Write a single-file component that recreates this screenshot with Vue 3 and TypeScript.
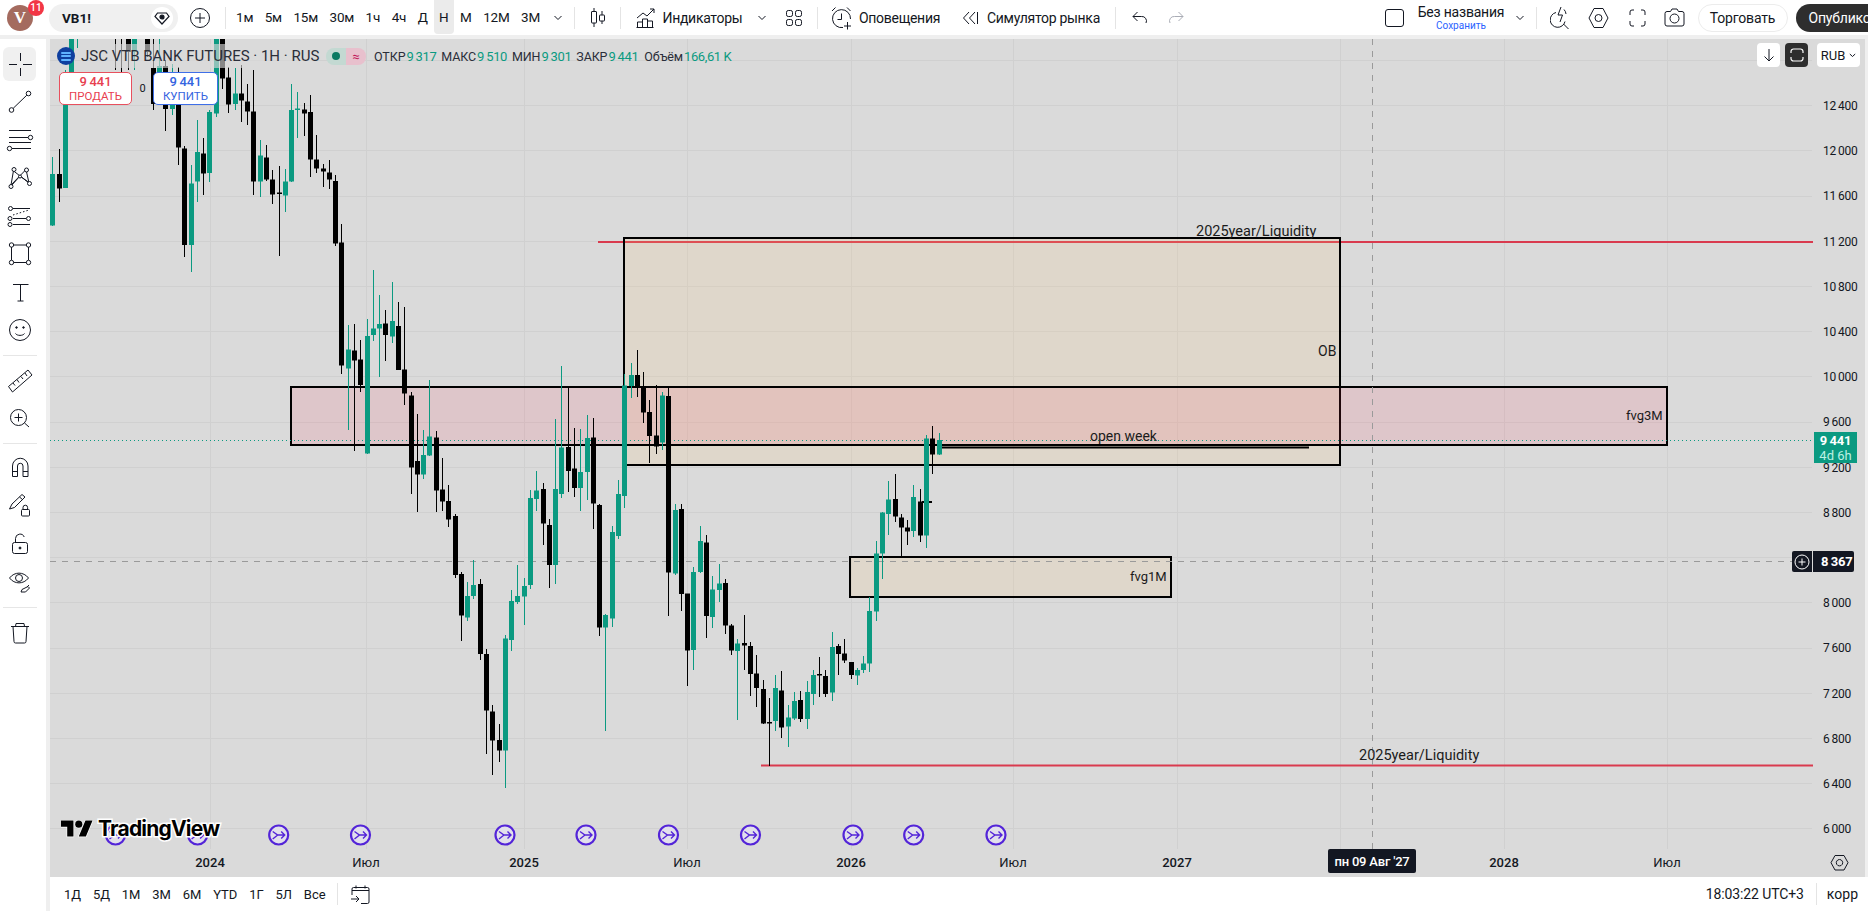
<script setup lang="ts">
type Row = [number, number, number, number, number, number]

// Candles read off the chart: [index, up, wickTop, bodyTop, bodyBottom, wickBottom]
const upper: Row[] = [
  [0,1,320,372,527,527],[1,0,295,372,416,455],[2,1,60,66,414,414],[3,1,-36,-36,66,66],[4,1,-36,-36,-36,-6],
  [10,0,-36,-40,-40,60],[11,0,-36,-40,-40,150],[12,0,-36,-36,6,60],[13,1,-36,-36,6,60],[15,0,-36,-36,6,20],
  [16,0,-36,54,162,180],[17,1,-36,48,90,110],[18,0,30,48,177,242],[19,1,40,120,177,195],[20,0,50,150,293,345],
  [21,0,288,295,585,620],[22,1,345,400,585,665],[23,1,210,306,395,455],[24,0,262,310,371,435],[25,1,180,186,369,395],
  [26,1,-36,-36,190,200],[27,0,-36,-36,85,115],[28,0,50,82,164,188],[29,1,52,130,162,178],[30,0,45,130,152,215],
  [31,0,100,154,185,225],[32,0,58,184,395,435],[33,1,268,316,395,440],[34,0,283,322,388,392],[35,0,360,388,434,460],
  [36,0,348,427,431,617],[37,1,355,394,437,485],[38,1,100,180,395,395],[39,1,124,176,179,263],[40,0,157,178,191,257],
  [41,0,135,186,329,380],[42,0,253,328,356,368],[43,0,340,355,365,410],[44,0,330,367,389,416],[45,0,375,393,580,588],
  [46,0,520,577,947,971],[47,1,823,898,956,1140],[48,0,820,901,932,1202],[49,0,870,928,1005,1025],[50,1,805,858,1211,1211],
  [51,1,658,835,855,872],[52,1,733,822,836,980],[53,0,778,820,855,932],[54,1,694,813,860,878],[55,0,754,828,960,960],
  [56,0,770,958,1031,1065],[57,0,1024,1036,1253,1331],[58,0,1092,1233,1274,1385],[59,1,1140,1215,1274,1287],
  [60,1,988,1160,1217,1217],[61,0,1143,1162,1322,1385],[62,0,1222,1318,1355,1382],[63,0,1303,1353,1409,1430],
  [64,0,1392,1398,1575,1583],[65,0,1566,1572,1697,1772],[66,1,1596,1638,1703,1712],[67,1,1528,1605,1638,1646],
  [68,0,1585,1602,1812,1830],[69,0,1795,1812,1982,2112],[70,0,1965,1984,2072,2175],[71,0,2022,2070,2102,2135],
]
const lower: Row[] = [
  [72,1,885,895,1232,1342],[73,1,750,783,900,932],[74,1,675,768,786,790],[75,1,712,738,770,855],[76,1,450,474,735,745],
  [77,1,393,452,477,513],[78,0,427,447,551,615],[79,0,537,555,675,743],[80,1,235,447,675,730],[81,1,78,323,462,472],
  [82,0,143,321,393,455],[83,0,262,385,444,470],[84,1,265,396,444,513],[85,1,225,294,396,478],[86,0,232,292,491,567],
  [87,0,490,495,863,887],[88,1,822,825,863,1172],[89,1,558,576,836,860],[90,1,420,462,588,597],[91,1,100,137,468,503],
  [92,1,67,105,138,173],[93,0,28,105,140,170],[94,0,95,140,218,248],[95,0,180,216,288,368],[96,0,135,286,320,342],
  [97,1,155,167,308,330],[98,0,142,168,698,827],[99,1,490,510,700,703],[100,0,492,507,762,812],[101,0,760,760,932,1037],
  [102,1,680,696,930,990],[103,1,558,603,696,697],[104,0,585,608,828,893],[105,1,708,748,831,863],[106,1,672,730,750,785],
  [107,0,717,729,857,882],[108,0,850,857,932,945],[109,1,895,910,933,1140],[110,0,825,909,917,990],[111,0,905,918,1002,1067],
  [112,0,945,1000,1044,1100],[113,0,1018,1047,1151,1151],[114,0,1072,1146,1149,1277],[115,1,1003,1044,1143,1172],
  [116,0,993,1051,1163,1193],[117,1,1095,1132,1160,1220],[118,1,1055,1083,1135,1138],[119,0,1052,1080,1137,1145],
  [120,1,1023,1056,1137,1167],[121,1,988,1005,1062,1094],[122,0,951,1002,1005,1070],[123,0,990,1008,1062,1070],
  [124,1,876,921,1058,1083],[125,0,910,918,942,1005],[126,0,897,940,961,968],[127,0,965,966,1005,1017],
  [128,1,984,990,1007,1035],[129,1,948,970,990,997],[130,1,770,813,971,996],[131,1,602,640,815,843],[132,1,515,518,641,717],
  [133,1,423,478,522,585],[134,0,402,477,530,546],[135,0,520,532,563,650],[136,0,540,562,575,615],[137,1,435,471,573,590],
  [138,0,445,485,587,605],[139,1,283,295,587,622],[140,0,258,295,344,402],[141,1,277,300,344,345],
]

const candles = [
  ...upper.map((r) => ({ r, base: 50 })),
  ...lower.map((r) => ({ r, base: 340 })),
].map(({ r, base }) => {
  const y = (v: number) => Math.round((base + v / 3) * 2) / 2
  const x = Math.round(52.3 + 6.286 * r[0])
  return {
    id: r[0],
    x,
    color: r[1] ? '#0b9a81' : '#000000',
    wickTop: y(r[2]),
    wickBottom: y(r[5]),
    bodyTop: y(r[3]),
    bodyHeight: Math.max(y(r[4]) - y(r[3]), r[3] === r[4] ? 0 : 1.5),
  }
})

const gridY = Array.from({ length: 18 }, (_, k) => 60.5 + Math.round(45.2 * k))
const gridX = [210, 366, 524, 687, 851, 1013, 1177, 1340, 1504, 1667]
const prices = ['12\u2009400', '12\u2009000', '11\u2009600', '11\u2009200', '10\u2009800', '10\u2009400', '10\u2009000', '9\u2009600', '9\u2009200', '8\u2009800', '', '8\u2009000', '7\u2009600', '7\u2009200', '6\u2009800', '6\u2009400', '6\u2009000']
  .map((t, k) => ({ t, y: 105.5 + 45.2 * k }))
  .filter((p) => p.t)
const times = [
  { t: '2024', x: 210, b: true }, { t: 'Июл', x: 366, b: false }, { t: '2025', x: 524, b: true }, { t: 'Июл', x: 687, b: false },
  { t: '2026', x: 851, b: true }, { t: 'Июл', x: 1013, b: false }, { t: '2027', x: 1177, b: true },
  { t: '2028', x: 1504, b: true }, { t: 'Июл', x: 1667, b: false },
]
const events = [115.5, 197.6, 278.7, 360.5, 505, 586, 668.5, 750.5, 853, 913.7, 996]
const intervals = ['1м', '5м', '15м', '30м', '1ч', '4ч', 'Д', 'Н', 'М', '12М', '3М']
const ranges = ['1Д', '5Д', '1М', '3М', '6М', 'YTD', '1Г', '5Л', 'Все']
const ohlc = [['ОТКР', '9\u2009317'], ['МАКС', '9\u2009510'], ['МИН', '9\u2009301'], ['ЗАКР', '9\u2009441']]
const lastPrice = '9\u2009441'
const crossPrice = '8\u2009367'
</script>

<template>
  <div class="app">
    <header class="topbar">
      <div class="avatar"><span>V</span><b class="badge">11</b></div>
      <div class="symbol">
        <span class="symbol-name">VB1!</span>
        <span class="symbol-gem">
          <svg width="18" height="18" viewBox="0 0 18 18" fill="none" stroke="#131722" stroke-width="1.2">
            <path d="M4.5 4h9L16 7.5 9 15 2 7.5z" />
            <circle cx="9" cy="8" r="2" fill="#131722" />
          </svg>
        </span>
      </div>
      <svg class="plus" width="22" height="22" viewBox="0 0 22 22" fill="none" stroke="#131722">
        <circle cx="11" cy="11" r="9.5" /><path d="M11 6v10M6 11h10" />
      </svg>
      <i class="sep sep-a"></i>
      <nav class="intervals">
        <button v-for="t in intervals" :key="t" class="tf" :class="{ on: t === 'Н' }">{{ t }}</button>
      </nav>
      <svg class="chev chev-tf" width="10" height="6" viewBox="0 0 10 6" fill="none" stroke="#131722"><path d="M1.5 1L5 4.5 8.5 1" /></svg>
      <i class="sep sep-b"></i>
      <svg class="candle-ico" width="16" height="20" viewBox="0 0 16 20" fill="none" stroke="#131722">
        <path d="M4 0v3M4 15v4M12 3v4M12 13v3" /><rect x="1.5" y="3.5" width="5" height="11.5" rx=".5" /><rect x="9.5" y="7" width="5" height="6" rx=".5" />
      </svg>
      <i class="sep sep-c"></i>
      <svg class="ind-ico" width="20" height="20" viewBox="0 0 20 20" fill="none" stroke="#131722">
        <path d="M1 10l6-5 4 3 7-7M14 1h4v4" /><path d="M1.5 19v-5h5v5M6.5 19v-8h5v8M11.5 19v-6h5v6M.5 19.5h17" />
      </svg>
      <span class="label l-ind">Индикаторы</span>
      <svg class="chev chev-ind" width="10" height="6" viewBox="0 0 10 6" fill="none" stroke="#131722"><path d="M1.5 1L5 4.5 8.5 1" /></svg>
      <svg class="grid-ico" width="18" height="18" viewBox="0 0 18 18" fill="none" stroke="#131722">
        <rect x="1.5" y="1.5" width="6" height="6" rx="1.8" /><rect x="10.5" y="1.5" width="6" height="6" rx="1.8" />
        <rect x="1.5" y="10.5" width="6" height="6" rx="1.8" /><rect x="10.5" y="10.5" width="6" height="6" rx="1.8" />
      </svg>
      <i class="sep sep-d"></i>
      <svg class="alert-ico" width="22" height="24" viewBox="0 0 22 24" fill="none" stroke="#131722">
        <path d="M12 21.500A9 9 0 1 1 19.500 13M10.500 7.500v6h-4M1 5l3.500-3.500M16 1.500L19.500 5M16.500 16v7.500M13 20h7" />
      </svg>
      <span class="label l-alert">Оповещения</span>
      <svg class="replay-ico" width="17" height="14" viewBox="0 0 17 14" fill="none" stroke="#131722">
        <path d="M7 1L1.500 7 7 13M13 1L7.500 7 13 13M15.500 1v12" />
      </svg>
      <span class="label l-replay">Симулятор рынка</span>
      <i class="sep sep-e"></i>
      <svg class="undo" width="15" height="13" viewBox="0 0 15 13" fill="none" stroke="#131722"><path d="M5.500 1L1 5.500 5.500 10M1 5.500h8.500a4.500 4.500 0 0 1 4.500 6.500" /></svg>
      <svg class="redo" width="15" height="13" viewBox="0 0 15 13" fill="none" stroke="#a9acb5"><path d="M9.500 1L14 5.500 9.500 10M14 5.500H5.500A4.500 4.500 0 0 0 1 12" /></svg>

      <span class="square"></span>
      <div class="layout"><span class="layout-name">Без названия</span><span class="layout-save">Сохранить</span></div>
      <svg class="chev chev-layout" width="10" height="6" viewBox="0 0 10 6" fill="none" stroke="#131722"><path d="M1.5 1L5 4.5 8.5 1" /></svg>
      <i class="sep sep-f"></i>
      <svg class="bolt" width="20" height="24" viewBox="0 0 20 24" fill="none" stroke="#131722">
        <path d="M6 6.500A7.500 7.500 0 1 0 15 15.500M13.500 18l5 5M11 1L8 9h4.500L10 16M14 3.500a7.500 7.500 0 0 1 2 4.500" />
      </svg>
      <svg class="hex" width="21" height="22" viewBox="0 0 21 22" fill="none" stroke="#131722">
        <path d="M6 1.500h9L20 11l-5 9.500H6L1 11z" /><circle cx="10.5" cy="11" r="3.5" />
      </svg>
      <svg class="full" width="17" height="18" viewBox="0 0 17 18" fill="none" stroke="#131722">
        <path d="M1 6V3a2 2 0 0 1 2-2h2M12 1h2a2 2 0 0 1 2 2v3M16 12v3a2 2 0 0 1-2 2h-2M5 17H3a2 2 0 0 1-2-2v-3" />
      </svg>
      <svg class="camera" width="21" height="19" viewBox="0 0 21 19" fill="none" stroke="#131722">
        <path d="M6.500 3.500L8 1h5l1.500 2.500H18a2 2 0 0 1 2 2V16a2 2 0 0 1-2 2H3a2 2 0 0 1-2-2V5.500a2 2 0 0 1 2-2z" /><circle cx="10.5" cy="10.5" r="4.5" />
      </svg>
      <button class="pill trade">Торговать</button>
      <button class="pill publish">Опубликовать</button>
    </header>

    <div class="main">
      <aside class="tools">
        <span class="tool">
          <svg viewBox="0 0 40 38" fill="none" stroke="#131722">
            <rect x="3" y="2" width="33" height="34" rx="6" fill="#f0f0f0" stroke="none" />
            <path d="M9 19.5h8M23 19.5h9M20.5 8v8M20.5 23v8" />
          </svg>
        </span>
        <span class="tool">
          <svg viewBox="0 0 40 38" fill="none" stroke="#131722">
            <circle cx="28.5" cy="10.5" r="2.3" /><circle cx="11.5" cy="27" r="2.3" /><path d="M26.800 12.200L13.200 25.300" />
          </svg>
        </span>
        <span class="tool">
          <svg viewBox="0 0 40 38" fill="none" stroke="#131722">
            <path d="M9 9.500h22M9 16.500h19M9 21.500h22M12 27.500h19" /><circle cx="30.5" cy="16.5" r="2.2" /><circle cx="9.5" cy="27.5" r="2.2" />
          </svg>
        </span>
        <span class="tool">
          <svg viewBox="0 0 40 38" fill="none" stroke="#131722">
            <path d="M13.500 11.500L11 26l15-15.500 3 13.500-16-12.500M20 17l9 6.500M20 17l-8 9" />
            <circle cx="14" cy="10.5" r="2" fill="#fff" /><circle cx="26.5" cy="11" r="2" fill="#fff" /><circle cx="29.5" cy="24.5" r="2" fill="#fff" /><circle cx="11" cy="27.5" r="2" fill="#fff" /><circle cx="20" cy="17.5" r="1.5" fill="#fff" />
          </svg>
        </span>
        <span class="tool">
          <svg viewBox="0 0 40 38" fill="none" stroke="#131722">
            <path d="M13 11.500h17M13 21.500h13M13 27.500h17" /><path d="M13 18l16-5" stroke-dasharray="1.5 2" />
            <circle cx="10.5" cy="11.5" r="2" /><circle cx="10" cy="21.5" r="2" /><circle cx="10" cy="27.5" r="2" /><circle cx="28.5" cy="21.5" r="2" />
          </svg>
        </span>
        <span class="tool">
          <svg viewBox="0 0 40 38" fill="none" stroke="#131722">
            <path d="M11.500 12v13M28.500 12v13M13.500 10h13M13.500 27.500h13" />
            <circle cx="11.5" cy="10" r="2.2" /><circle cx="28.5" cy="10" r="2.2" /><circle cx="11.5" cy="27.5" r="2.2" /><circle cx="28.5" cy="27.5" r="2.2" />
          </svg>
        </span>
        <span class="tool">
          <svg viewBox="0 0 40 38" fill="none" stroke="#131722"><path d="M13 11.500h15.500M20.500 11.500v16.500M17.500 28h6" /></svg>
        </span>
        <span class="tool">
          <svg viewBox="0 0 40 38" fill="none" stroke="#131722">
            <circle cx="20" cy="19" r="10.5" /><path d="M15.500 22.500c1.500 2.500 7.500 2.500 9 0" /><circle cx="16.5" cy="16.5" r=".8" fill="#131722" /><circle cx="23.5" cy="16.5" r=".8" fill="#131722" />
          </svg>
        </span>
        <i class="rule"></i>
        <span class="tool">
          <svg viewBox="0 0 40 38" fill="none" stroke="#131722">
            <path d="M8.500 25.500L28 9l4 5-19.500 17zM13 22l2 2.500M17 18.500l2 3M21 15.500l2 2.500M25 12l2 3" />
          </svg>
        </span>
        <span class="tool">
          <svg viewBox="0 0 40 38" fill="none" stroke="#131722">
            <circle cx="18.5" cy="18.5" r="8" /><path d="M24.500 24l4.500 4M18.500 14.500v8M14.500 18.500h8" />
          </svg>
        </span>
        <i class="rule"></i>
        <span class="tool">
          <svg viewBox="0 0 40 38" fill="none" stroke="#131722">
            <path d="M12.500 27.500V17a7.700 7.700 0 0 1 15.500 0v10.500h-5V17a2.700 2.700 0 0 0-5.500 0v10.500zM12.500 22.500h5M23 22.500h5" />
          </svg>
        </span>
        <span class="tool">
          <svg viewBox="0 0 40 38" fill="none" stroke="#131722">
            <path d="M12 17l10-9.500 3 2.500-10.500 10.500-5 1.500zM19.500 10l3.500 3" /><rect x="21.5" y="22.5" width="8" height="6.5" rx="1" /><path d="M23 22.500v-2a2.300 2.300 0 0 1 4.600 0v2" />
          </svg>
        </span>
        <span class="tool">
          <svg viewBox="0 0 40 38" fill="none" stroke="#131722">
            <rect x="12.5" y="17.5" width="15" height="11" rx="2" /><path d="M15.500 17.500v-4a4.500 4.500 0 0 1 8.700-1.500" /><circle cx="20" cy="23" r="1" fill="#131722" />
          </svg>
        </span>
        <span class="tool">
          <svg viewBox="0 0 40 38" fill="none" stroke="#131722">
            <path d="M9.500 15c5-6.500 14-6.500 19 0-5 6.500-14 6.500-19 0z" /><circle cx="19" cy="15" r="3.5" /><path d="M21 29l1-2.500 6-3 1.500 1.500-4 4zM29 22l-2 2" />
          </svg>
        </span>
        <i class="rule"></i>
        <span class="tool">
          <svg viewBox="0 0 40 38" fill="none" stroke="#131722">
            <path d="M11 13.500h18M15.500 13.500l.5-3h8l.5 3M13 13.500l1 15a1.500 1.500 0 0 0 1.500 1.500h9a1.500 1.500 0 0 0 1.500-1.500l1-15" />
          </svg>
        </span>
      </aside>

      <div class="workspace">
        <section class="chart">
          <svg class="canvas" viewBox="50 39 1815 838" width="1815" height="838">
            <g stroke="#d0d0d0" shape-rendering="crispEdges">
              <line v-for="y in gridY" :key="y" x1="50" x2="1812" :y1="y" :y2="y" />
              <line v-for="x in gridX" :key="x" :x1="x + 0.5" :x2="x + 0.5" y1="39" y2="849" />
            </g>

            <line x1="598" x2="1813" y1="242" y2="242" stroke="#d93a4e" stroke-width="2" />
            <line x1="761" x2="1813" y1="765.5" y2="765.5" stroke="#d93a4e" stroke-width="2" />
            <g stroke="#000" stroke-width="2">
              <rect x="624" y="238" width="716" height="227" fill="rgba(255,200,120,.15)" />
              <rect x="291" y="387" width="1376" height="58" fill="rgba(255,60,90,.12)" />
              <rect x="850" y="557" width="321" height="40" fill="rgba(255,200,120,.15)" />
            </g>
            <line x1="941" x2="1309" y1="447.5" y2="447.5" stroke="#000" stroke-width="2" />
            <line x1="922" x2="932" y1="502" y2="502" stroke="#000" stroke-width="2" />

            <g stroke="#9a9a9a" stroke-dasharray="6 6">
              <line x1="50" x2="1812" y1="561.5" y2="561.5" />
              <line x1="1372.5" x2="1372.5" y1="39" y2="849" />
            </g>
            <line x1="50" x2="1814" y1="440.5" y2="440.5" stroke="#0b9a81" stroke-dasharray="1 3" />

            <g v-for="c in candles" :key="c.id">
              <line :x1="c.x + 0.5" :x2="c.x + 0.5" :y1="c.wickTop" :y2="c.wickBottom" :stroke="c.color" shape-rendering="crispEdges" />
              <rect :x="c.x - 2" :y="c.bodyTop" width="5" :height="c.bodyHeight" :fill="c.color" />
            </g>

            <text class="note wide" x="1196" y="236">2025year/Liquidity</text>
            <text class="note wide" x="1359" y="760">2025year/Liquidity</text>
            <text class="note" x="1318" y="356">OB</text>
            <text class="note fvg" x="1626" y="420">fvg3M</text>
            <text class="note" x="1090" y="441">open week</text>
            <text class="note fvg" x="1130" y="581">fvg1M</text>

            <g v-for="x in events" :key="x" :transform="`translate(${x} 835)`">
              <circle r="9.5" fill="#e2e0ec" stroke="#5324d8" stroke-width="2.2" />
              <path d="M-6-3.500L-1 0H6M2.500-3.500L6 0 2.500 3.500M-6 4L-1 0" fill="none" stroke="#5324d8" stroke-width="1.4" />
            </g>

            <text v-for="p in prices" :key="p.t" class="axis price" x="1823" :y="p.y + 4.5">{{ p.t }}</text>
            <text v-for="(t, i) in times" :key="i" class="axis" :class="{ year: t.b }" :x="t.x" y="867" text-anchor="middle">{{ t.t }}</text>
            <path d="M1835 855.5h9l4 7.2-4 7.300h-9l-4-7.300z M1839.5 859.5a3.200 3.200 0 1 0 .01 0z" fill="none" stroke="#131722" />
          </svg>

          <div class="brand">
            <svg width="32" height="25" viewBox="0 0 36 28" fill="#000" stroke="#fff" stroke-width="1.5" paint-order="stroke">
              <path d="M14 22H7V11H0V4h14v18zM28 22h-8l7.500-18h8L28 22z" /><circle cx="20" cy="8" r="4" />
            </svg>
            <span>TradingView</span>
          </div>

          <div class="legend">
            <div class="legend-row">
              <span class="ticker-logo"><i></i><i></i><i></i></span>
              <span class="ticker">JSC VTB BANK FUTURES · 1H · RUS</span>
              <span class="status"><span class="st-open"><i></i></span><span class="st-delay">≈</span></span>
              <span v-for="o in ohlc" :key="o[0]" class="ohlc">{{ o[0] }}<b>{{ o[1] }}</b></span>
              <span class="ohlc vol">Объём<b>166,61 K</b></span>
            </div>
          </div>

          <div class="trade-row">
            <div class="order sell"><b>{{ lastPrice }}</b><span>ПРОДАТЬ</span></div>
            <span class="spread">0</span>
            <div class="order buy"><b>{{ lastPrice }}</b><span>КУПИТЬ</span></div>
          </div>

          <div class="corner">
            <span class="mini">
              <svg width="12" height="14" viewBox="0 0 12 14" fill="none" stroke="#131722"><path d="M6 1v12M1.500 8.500L6 13l4.500-4.500" /></svg>
            </span>
            <span class="mini dark">
              <svg width="14" height="14" viewBox="0 0 14 14" fill="none" stroke="#fff" stroke-width="1.2"><path d="M1 5V3.500A2.500 2.500 0 0 1 3.500 1h7A2.500 2.500 0 0 1 13 3.500V5M13 9v1.500a2.500 2.500 0 0 1-2.500 2.500h-7A2.500 2.500 0 0 1 1 10.500V9" /></svg>
            </span>
            <span class="mini currency">RUB
              <svg width="7" height="5" viewBox="0 0 7 5" fill="none" stroke="#131722"><path d="M.8 1l2.700 2.500L6.200 1" /></svg>
            </span>
          </div>

          <div class="tag-last"><b>{{ lastPrice }}</b><span>4d 6h</span></div>
          <div class="tag-cross">
            <span class="tag-plus"><svg width="16" height="16" viewBox="0 0 16 16" fill="none" stroke="#fff"><circle cx="8" cy="8" r="7" /><path d="M8 4.500v7M4.500 8h7" /></svg></span>
            <b>{{ crossPrice }}</b>
          </div>
          <div class="tag-date">пн 09 Авг '27</div>
        </section>

        <footer class="bottombar">
          <button v-for="r in ranges" :key="r" class="range">{{ r }}</button>
          <i class="sep-inline"></i>
          <svg class="cal" width="19" height="19" viewBox="0 0 19 19" fill="none" stroke="#131722">
            <path d="M1 5.500h17M5 .5v3M14 .5v3M1 10V4a1.500 1.500 0 0 1 1.500-1.500h14A1.500 1.500 0 0 1 18 4v13a1.500 1.500 0 0 1-1.500 1.500H10M0 14h8M5 11l3 3-3 3" />
          </svg>
          <span class="clock">18:03:22 UTC+3</span>
          <i class="sep-inline sep-clock"></i>
          <span class="corr">корр</span>
        </footer>
      </div>
    </div>
  </div>
</template>

<style scoped>
.app {
  width: 1868px;
  height: 911px;
  overflow: hidden;
  display: flex;
  flex-direction: column;
  background: #fff;
  color: #131722;
  font-family: Roboto, "Liberation Sans", sans-serif;
  white-space: nowrap;
}
button { font: inherit; color: inherit; background: none; border: 0; padding: 0; }

.topbar {
  height: 35px;
  flex: none;
  display: flex;
  align-items: center;
  font-size: 14px;
  background: #fff;
}
.topbar > * { flex: none; }
.avatar {
  position: relative;
  width: 26px;
  height: 26px;
  margin-left: 7px;
  border-radius: 50%;
  background: #a46b5f;
  color: #fff;
  font: 700 17px/26px "Liberation Serif", serif;
  text-align: center;
}
.badge {
  position: absolute;
  left: 21px;
  top: -5px;
  width: 16px;
  height: 16px;
  border-radius: 50%;
  background: #f23645;
  font: 500 10px/16px Roboto, sans-serif;
}
.symbol {
  width: 129px;
  height: 28px;
  margin-left: 16px;
  border-radius: 14px;
  background: #f0f0f0;
  display: flex;
  align-items: center;
  justify-content: space-between;
  padding: 0 5px 0 13px;
  box-sizing: border-box;
}
.symbol-name { font-weight: 700; font-size: 13.5px; }
.symbol-gem { width: 22px; height: 22px; border-radius: 50%; background: #fff; display: flex; align-items: center; justify-content: center; }
.plus { margin-left: 11px; }
.sep { width: 1px; height: 22px; background: #e4e4e4; }
.sep-a { margin-left: 14px; }
.intervals { display: flex; align-items: center; gap: 11.5px; margin-left: 10px; }
.tf { position: relative; height: 33px; line-height: 33px; font-size: 13.5px; letter-spacing: -.2px; }
.tf.on::before { content: ""; position: absolute; inset: -1px -5px 0; background: #ebebeb; border-radius: 0 0 4px 4px; z-index: -1; }
.tf.on { z-index: 0; }
.chev-tf { margin-left: 13px; }
.sep-b { margin-left: 11px; }
.candle-ico { margin-left: 14.5px; }
.sep-c { margin-left: 14px; }
.ind-ico { margin-left: 15px; }
.label { letter-spacing: -.3px; }
.l-ind { margin-left: 7px; width: 80px; }
.chev-ind { margin-left: 14.5px; }
.grid-ico { margin-left: 18px; }
.sep-d { margin-left: 14px; }
.alert-ico { margin-left: 13px; }
.l-alert { margin-left: 6px; width: 82px; }
.replay-ico { margin-left: 21px; }
.l-replay { margin-left: 8px; width: 114px; }
.sep-e { margin-left: 14px; }
.undo { margin-left: 16px; }
.redo { margin-left: 22px; }
.square { width: 19px; height: 18px; margin-left: 201px; border: 1px solid #131722; border-radius: 3px; box-sizing: border-box; }
.layout { width: 86px; margin-left: 14px; display: flex; flex-direction: column; align-items: center; line-height: 12px; }
.layout-name { font-size: 14px; line-height: 15px; letter-spacing: -.2px; }
.layout-save { font-size: 10px; line-height: 11px; color: #2962ff; }
.chev-layout { margin-left: 10.5px; }
.sep-f { margin-left: 11px; }
.bolt { margin-left: 13px; }
.hex { margin-left: 18px; }
.full { margin-left: 20px; }
.camera { margin-left: 18px; }
.pill { height: 28px; border-radius: 14px; box-sizing: border-box; font-size: 14px; letter-spacing: -.2px; }
.trade { width: 90px; margin-left: 13px; border: 1px solid #ececec; }
.publish { width: 110px; margin-left: 8px; padding-left: 13px; text-align: left; background: #2e2e2e; color: #fff; }

.main { flex: 1; min-height: 0; display: flex; padding-top: 4px; background: #efefef; }
.tools { width: 46px; flex: none; background: #fff; padding-top: 6px; display: flex; flex-direction: column; }
.tool { width: 40px; height: 38px; flex: none; display: block; }
.tool svg { width: 40px; height: 38px; display: block; }
.rule { display: block; height: 1px; margin: 6px 6px 5px 3px; width: 34px; background: #e6e6e6; }
.workspace { flex: 1; min-width: 0; display: flex; flex-direction: column; padding-left: 4px; }

.chart { position: relative; width: 1815px; height: 838px; flex: none; background: #dadada; overflow: hidden; }
.canvas { position: absolute; left: 0; top: 0; display: block; }
.note { font-size: 14px; fill: #1b1b1b; }
.note.wide { font-size: 14.5px; }
.note.fvg { font-size: 13px; }
.axis { font-size: 13px; fill: #131722; }
.axis.price { font-size: 12px; letter-spacing: -.3px; }
.axis.year { font-weight: 500; }

.brand { position: absolute; left: 11px; top: 776px; display: flex; align-items: center; gap: 5px; }
.brand span {
  font: 700 21px/28px Inter, Roboto, sans-serif;
  letter-spacing: -.8px;
  color: #000;
  -webkit-text-stroke: 3px #fff;
  paint-order: stroke fill;
}

.legend { position: absolute; left: 7px; top: 6px; height: 27px; }
.legend-row { display: flex; align-items: center; height: 22px; }
.ticker-logo {
  width: 18px; height: 18px; border-radius: 50%; background: #0f3f9f;
  display: flex; flex-direction: column; align-items: center; justify-content: center; gap: 1.5px;
}
.ticker-logo i { display: block; width: 10px; height: 2px; background: #5fb3ff; border-radius: 1px; }
.ticker { font-size: 15px; margin-left: 5px; width: 238px; padding-left: 1px; box-sizing: border-box; background: rgba(218,218,218,.62); color: #2a2e39; line-height: 24px; }
.status { display: flex; width: 40px; height: 17px; margin-left: 8px; border-radius: 8px; overflow: hidden; }
.st-open { flex: 1; background: #c3d9d2; display: flex; align-items: center; justify-content: center; }
.st-open i { width: 8px; height: 8px; border-radius: 50%; background: #0a7a62; }
.st-delay { flex: 1; background: #e8c0cd; color: #c2185b; font-size: 13px; line-height: 17px; text-align: center; }
.ohlc { font-size: 12.5px; margin-left: 5px; color: #2a2e39; letter-spacing: -.1px; }
.status + .ohlc { margin-left: 8px; }
.ohlc b { font-size: 13px; font-weight: 400; color: #0b9a81; margin-left: 1px; letter-spacing: -.4px; }
.vol { margin-left: 6px; }

.trade-row { position: absolute; left: 9px; top: 33px; display: flex; align-items: center; }
.order {
  height: 33px; box-sizing: border-box; border-radius: 5px; border: 1px solid; background: #fff;
  display: flex; flex-direction: column; align-items: center; justify-content: center;
  font-size: 11.5px; line-height: 14px;
}
.order b { font-weight: 500; font-size: 13px; }
.sell { width: 73px; border-color: #e8505e; color: #e8404f; }
.buy { width: 65px; border-color: #3f6fe8; color: #3464e0; }
.spread { width: 21px; text-align: center; font-size: 11px; }

.corner { position: absolute; left: 1707px; top: 4px; display: flex; gap: 5px; }
.mini { width: 23px; height: 24px; background: #fff; border-radius: 4px; display: flex; align-items: center; justify-content: center; font-size: 13px; gap: 4px; }
.dark { background: #2e2e2e; }
.currency { width: 43px; margin-left: 4px; }

.tag-last {
  position: absolute; left: 1764px; top: 393px; width: 43px; height: 31px; background: #0b9a81;
  display: flex; flex-direction: column; align-items: center; justify-content: center; font-size: 13px; line-height: 15px; color: #fff;
}
.tag-last span { color: #bdf1e3; }
.tag-last b { font-weight: 700; letter-spacing: -.2px; }
.tag-cross {
  position: absolute; left: 1742px; top: 512px; width: 62px; height: 21px; background: #131722; color: #fff; border-radius: 2px;
  display: flex; align-items: center; font-size: 13px;
}
.tag-plus { width: 21px; height: 21px; flex: none; display: flex; align-items: center; justify-content: center; border-right: 1px solid #dadada; box-sizing: border-box; }
.tag-cross b { margin-left: 8px; font-weight: 700; letter-spacing: -.2px; }
.tag-date {
  position: absolute; left: 1278px; top: 810px; width: 88px; height: 24px; background: #131722; color: #fff; border-radius: 2px;
  font-size: 13px; font-weight: 500; line-height: 25px; text-align: center; letter-spacing: -.2px;
}

.bottombar { height: 34px; flex: none; background: #fff; display: flex; align-items: center; font-size: 13px; padding-left: 14px; letter-spacing: -.3px; }
.range { margin-right: 11.8px; }
.sep-inline { width: 1px; height: 22px; background: #e4e4e4; }
.cal { margin-left: 13px; }
.clock { margin-left: auto; font-size: 14px; letter-spacing: -.1px; }
.sep-clock { margin-left: 12px; }
.corr { margin-left: 10px; margin-right: 10px; font-size: 14px; letter-spacing: 0; }
</style>

<style>
html, body { margin: 0; padding: 0; background: #fff; }
</style>
